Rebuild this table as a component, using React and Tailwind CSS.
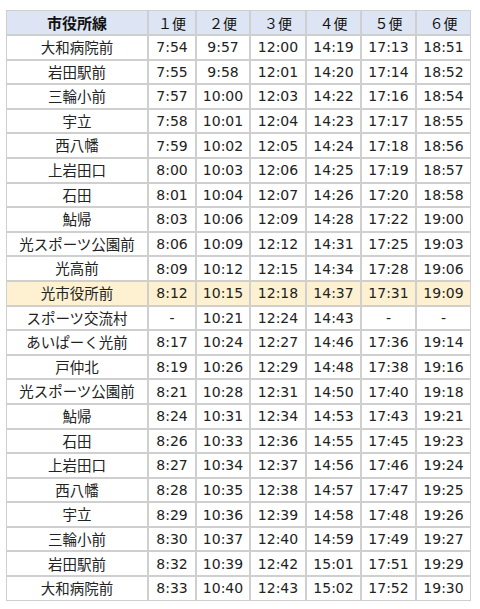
import React from 'react';

const stops = [
  ['大和病院前', '7:54', '9:57', '12:00', '14:19', '17:13', '18:51'],
  ['岩田駅前', '7:55', '9:58', '12:01', '14:20', '17:14', '18:52'],
  ['三輪小前', '7:57', '10:00', '12:03', '14:22', '17:16', '18:54'],
  ['宇立', '7:58', '10:01', '12:04', '14:23', '17:17', '18:55'],
  ['西八幡', '7:59', '10:02', '12:05', '14:24', '17:18', '18:56'],
  ['上岩田口', '8:00', '10:03', '12:06', '14:25', '17:19', '18:57'],
  ['石田', '8:01', '10:04', '12:07', '14:26', '17:20', '18:58'],
  ['鮎帰', '8:03', '10:06', '12:09', '14:28', '17:22', '19:00'],
  ['光スポーツ公園前', '8:06', '10:09', '12:12', '14:31', '17:25', '19:03'],
  ['光高前', '8:09', '10:12', '12:15', '14:34', '17:28', '19:06'],
  ['光市役所前', '8:12', '10:15', '12:18', '14:37', '17:31', '19:09'],
  ['スポーツ交流村', '-', '10:21', '12:24', '14:43', '-', '-'],
  ['あいぱーく光前', '8:17', '10:24', '12:27', '14:46', '17:36', '19:14'],
  ['戸仲北', '8:19', '10:26', '12:29', '14:48', '17:38', '19:16'],
  ['光スポーツ公園前', '8:21', '10:28', '12:31', '14:50', '17:40', '19:18'],
  ['鮎帰', '8:24', '10:31', '12:34', '14:53', '17:43', '19:21'],
  ['石田', '8:26', '10:33', '12:36', '14:55', '17:45', '19:23'],
  ['上岩田口', '8:27', '10:34', '12:37', '14:56', '17:46', '19:24'],
  ['西八幡', '8:28', '10:35', '12:38', '14:57', '17:47', '19:25'],
  ['宇立', '8:29', '10:36', '12:39', '14:58', '17:48', '19:26'],
  ['三輪小前', '8:30', '10:37', '12:40', '14:59', '17:49', '19:27'],
  ['岩田駅前', '8:32', '10:39', '12:42', '15:01', '17:51', '19:29'],
  ['大和病院前', '8:33', '10:40', '12:43', '15:02', '17:52', '19:30'],
];

const trips = ['１便', '２便', '３便', '４便', '５便', '６便'];
const widths = ['w-[142px]', 'w-[48px]', 'w-[54px]', 'w-[56px]', 'w-[55px]', 'w-[55px]', 'w-[55px]'];

const font = "font-['DejaVu_Sans','Noto_Sans_CJK_JP',sans-serif]";
const jp = "font-['Noto_Sans_CJK_JP',sans-serif]";

const App = () => {
  return (
    <div className="min-h-[609px] bg-white pt-[10px] pl-[6px]">
      <table className={`border-separate border-spacing-0 table-fixed w-[465px] text-[14px] text-[#222] ${font}`}>
        <colgroup>
          {widths.map((w, i) => (
            <col key={i} className={w} />
          ))}
        </colgroup>
        <thead>
          <tr className="bg-[#dde4f3]">
            <th className={`border border-[#cfcfcf] p-0 font-bold text-[15px] text-[#111] ${jp}`}>
              <div className="h-[23px] flex items-center justify-center leading-none">市役所線</div>
            </th>
            {trips.map((t) => (
              <th key={t} className={`border border-[#cfcfcf] p-0 font-normal text-[#111] ${jp}`}>
                <div className="h-[23px] flex items-center justify-center leading-none">{t}</div>
              </th>
            ))}
          </tr>
        </thead>
        <tbody>
          {stops.map((row, r) => {
            const hl = row[0] === '光市役所前';
            return (
              <tr key={r} className={hl ? 'bg-[#fdf1d1]' : 'bg-white'}>
                {row.map((cell, c) => (
                  <td
                    key={c}
                    className={`border border-[#cfcfcf] p-0 ${c === 0 ? `${jp} text-[14.5px]` : ''}`}
                  >
                    <div className="h-[22.6px] flex items-center justify-center leading-none">{cell}</div>
                  </td>
                ))}
              </tr>
            );
          })}
        </tbody>
      </table>
    </div>
  );
};

export default App;
